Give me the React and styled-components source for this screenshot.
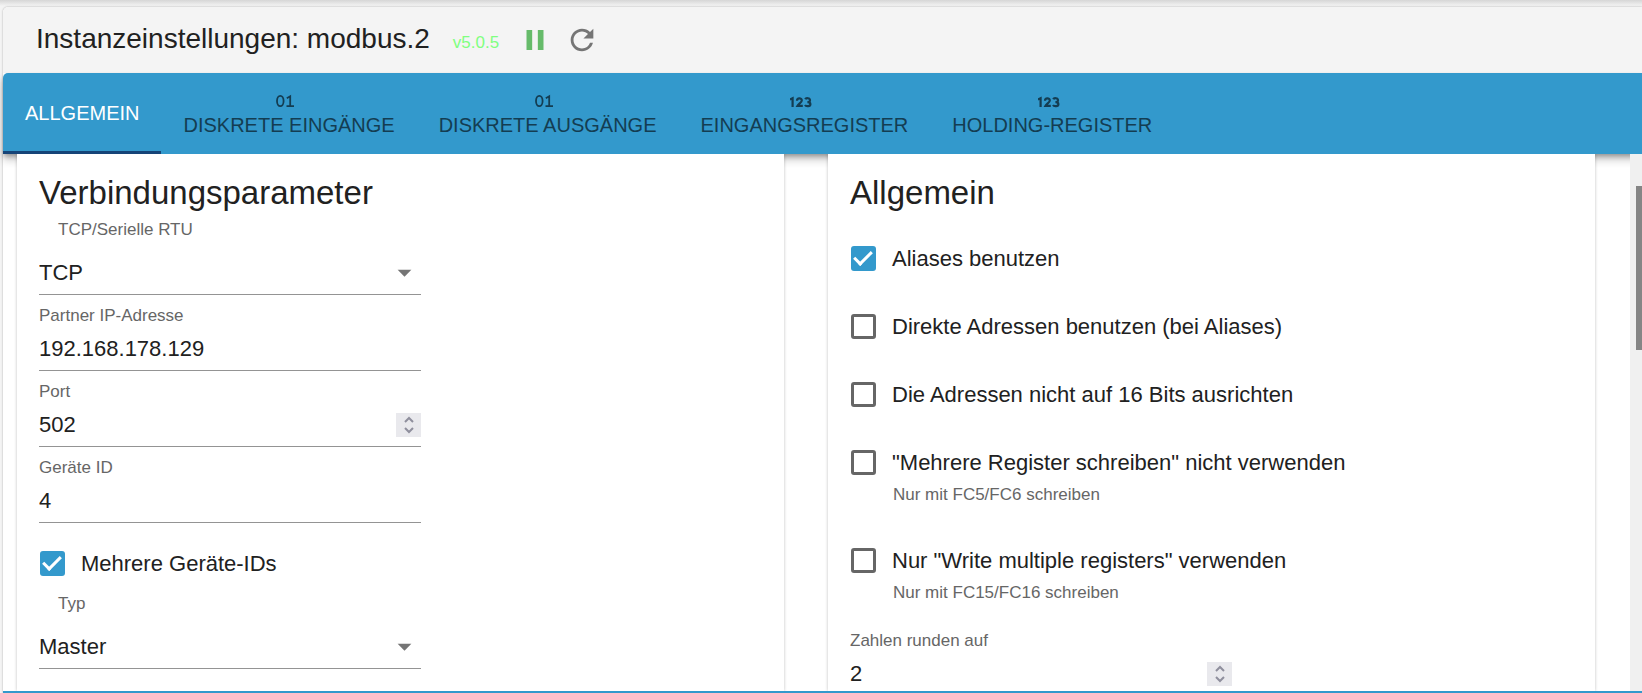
import React, { useState } from "react";
import styled, { createGlobalStyle } from "styled-components";
import { MdPause, MdRefresh, MdArrowDropDown } from "react-icons/md";

const TABS = [
  { id: "general", label: "Allgemein" },
  { id: "disInputs", label: "Diskrete Eingänge", icon: "bits" },
  { id: "coils", label: "Diskrete Ausgänge", icon: "bits" },
  { id: "inputRegs", label: "Eingangsregister", icon: "numbers" },
  { id: "holdingRegs", label: "Holding-Register", icon: "numbers" },
];

function BitsIcon() {
  return (
    <TabIcon viewBox="1 0 28 16" strokeWidth="1.8">
      <ellipse cx="6.3" cy="8" rx="3.3" ry="5.2" />
      <path d="M12.8 5.2 L16.2 3.2 V13 M12.5 13.2 H20" />
    </TabIcon>
  );
}

function NumbersIcon() {
  return (
    <TabIcon viewBox="2 0 28 16" strokeWidth="2.2">
      <path d="M2 6.4 L4.6 5.2 V14" />
      <path d="M9 7.8 C9 4.6 13.8 4.6 13.8 7.4 C13.8 9.4 10.4 11 9.4 12.9 H14.8" />
      <path d="M17.2 6.2 C18 4.6 22 4.9 22 7.2 C22 8.7 20.8 9.2 19.4 9.2 C21 9.2 22.4 9.8 22.4 11.2 C22.4 13.6 18 13.8 17 12" />
    </TabIcon>
  );
}

function SelectField({ id, label, value, options, onChange }) {
  return (
    <Field $select>
      <FieldLabel htmlFor={id} $indent>{label}</FieldLabel>
      <Control>
        <Select id={id} value={value} onChange={e => onChange(e.target.value)}>
          {options.map(o => <option key={o}>{o}</option>)}
        </Select>
        <Arrow size={33} />
      </Control>
    </Field>
  );
}

function TextField({ id, label, value, onChange, number }) {
  const step = n => onChange(String(Number(value) + n));

  return (
    <Field>
      <FieldLabel htmlFor={id}>{label}</FieldLabel>
      <Control>
        <Input id={id} type={number ? "number" : "text"} value={value} onChange={e => onChange(e.target.value)} />
        {number && (
          <Stepper>
            <StepButton type="button" aria-label="Erhöhen" onClick={() => step(1)}>
              <svg width="12" height="12" viewBox="0 0 12 12"><path d="M2 9 L6 5 L10 9" /></svg>
            </StepButton>
            <StepButton type="button" aria-label="Verringern" onClick={() => step(-1)}>
              <svg width="12" height="12" viewBox="0 0 12 12"><path d="M2 3 L6 7 L10 3" /></svg>
            </StepButton>
          </Stepper>
        )}
      </Control>
    </Field>
  );
}

function CheckField({ label, help, checked, onChange }) {
  return (
    <div>
      <CheckLabel>
        <Checkbox type="checkbox" checked={checked} onChange={e => onChange(e.target.checked)} />
        {label}
      </CheckLabel>
      {help && <Help>{help}</Help>}
    </div>
  );
}

export default function App() {
  const [tab, setTab] = useState("general");
  const [values, setValues] = useState({
    type: "TCP",
    bind: "192.168.178.129",
    port: "502",
    deviceId: "4",
    multiDeviceId: true,
    slave: "Master",
    useAliases: true,
    directAddresses: false,
    doNotAlign: false,
    onlySingle: false,
    onlyMultiple: false,
    round: "2",
  });
  const set = name => value => setValues({ ...values, [name]: value });

  return (
    <Page>
      <GlobalStyle />
      <Window>
        <Header>
          <Title>Instanzeinstellungen: modbus.2</Title>
          <Version>v5.0.5</Version>
          <IconButton $color="#66bb6a" aria-label="Anhalten"><MdPause size={34} /></IconButton>
          <IconButton $color="#757575" aria-label="Neu starten"><MdRefresh size={34} /></IconButton>
        </Header>
        <TabBar role="tablist">
          {TABS.map(t => (
            <Tab key={t.id} role="tab" aria-selected={tab === t.id} $active={tab === t.id} onClick={() => setTab(t.id)}>
              {t.icon === "bits" && <BitsIcon />}
              {t.icon === "numbers" && <NumbersIcon />}
              {t.label}
            </Tab>
          ))}
        </TabBar>
        <Body>
          <Content>
            <Card>
              <Heading>Verbindungsparameter</Heading>
              <SelectField id="type" label="TCP/Serielle RTU" value={values.type} options={["TCP", "Serial"]} onChange={set("type")} />
              <TextField id="bind" label="Partner IP-Adresse" value={values.bind} onChange={set("bind")} />
              <TextField id="port" label="Port" number value={values.port} onChange={set("port")} />
              <TextField id="deviceId" label="Geräte ID" value={values.deviceId} onChange={set("deviceId")} />
              <Checks $top={28}>
                <CheckField label="Mehrere Geräte-IDs" checked={values.multiDeviceId} onChange={set("multiDeviceId")} />
              </Checks>
              <SelectField id="slave" label="Typ" value={values.slave} options={["Master", "Slave"]} onChange={set("slave")} />
            </Card>
            <Card>
              <Heading>Allgemein</Heading>
              <Checks $top={27}>
                <CheckField label="Aliases benutzen" checked={values.useAliases} onChange={set("useAliases")} />
                <CheckField label="Direkte Adressen benutzen (bei Aliases)" checked={values.directAddresses} onChange={set("directAddresses")} />
                <CheckField label="Die Adressen nicht auf 16 Bits ausrichten" checked={values.doNotAlign} onChange={set("doNotAlign")} />
                <CheckField
                  label={'"Mehrere Register schreiben" nicht verwenden'}
                  help="Nur mit FC5/FC6 schreiben"
                  checked={values.onlySingle}
                  onChange={set("onlySingle")}
                />
                <CheckField
                  label={'Nur "Write multiple registers" verwenden'}
                  help="Nur mit FC15/FC16 schreiben"
                  checked={values.onlyMultiple}
                  onChange={set("onlyMultiple")}
                />
              </Checks>
              <TextField id="round" label="Zahlen runden auf" number value={values.round} onChange={set("round")} />
            </Card>
          </Content>
          <ScrollTrack>
            <ScrollThumb />
          </ScrollTrack>
        </Body>
      </Window>
    </Page>
  );
}

const GlobalStyle = createGlobalStyle`
  * {
    box-sizing: border-box;
  }

  body {
    margin: 0;
    font-family: "Liberation Sans", Arial, sans-serif;
    color: #212121;
  }

  button, input, select {
    font: inherit;
    color: inherit;
  }
`;

const Page = styled.div`
  display: flex;
  height: 100vh;
  padding: 7px 0 0 3px;
  overflow: hidden;
  background: linear-gradient(#d6d6d6, #f4f4f4 6px);
`;

const Window = styled.div`
  display: flex;
  flex-direction: column;
  flex: 1;
  min-width: 0;
  background: #fff;
  border-bottom: 2px solid #3399cc;
  border-top-left-radius: 5px;
  box-shadow: 0 0 2px rgba(0, 0, 0, 0.35);
`;

const Header = styled.header`
  display: flex;
  align-items: center;
  height: 66px;
  flex-shrink: 0;
  padding-left: 33px;
  background: #f4f4f4;
  border-top-left-radius: 5px;
`;

const Title = styled.h1`
  margin: 0 23px 0 0;
  font-size: 28px;
  line-height: 36px;
  font-weight: 400;
  padding-bottom: 2px;
`;

const Version = styled.span`
  margin-right: 19px;
  font-size: 17px;
  line-height: 20px;
  padding-top: 6px;
  color: #80ff80;
`;

const IconButton = styled.button`
  display: flex;
  margin-right: 13px;
  padding: 0;
  border: 0;
  background: none;
  color: ${props => props.$color};
  cursor: pointer;
`;

const TabBar = styled.nav`
  display: flex;
  height: 81px;
  flex-shrink: 0;
  background: #3399cc;
  border-top-left-radius: 5px;
  box-shadow: 0 3px 5px -1px rgba(0, 0, 0, 0.3), 0 6px 8px rgba(0, 0, 0, 0.2);
`;

const Tab = styled.button`
  display: flex;
  flex-direction: column;
  align-items: center;
  justify-content: center;
  gap: 4px;
  padding: 1px 22px 0;
  border: 0;
  border-bottom: 3px solid ${props => (props.$active ? "#164477" : "transparent")};
  background: none;
  color: ${props => (props.$active ? "#fff" : "#143d52")};
  font-size: 20px;
  line-height: 24px;
  text-transform: uppercase;
  white-space: nowrap;
  cursor: pointer;
`;

const TabIcon = styled.svg`
  width: 28px;
  height: 16px;
  margin-top: 4px;
  fill: none;
  stroke: currentColor;
`;

const Body = styled.div`
  display: flex;
  flex: 1;
  min-height: 0;
  position: relative;
`;

const Content = styled.div`
  display: grid;
  grid-template-columns: 1fr 1fr;
  gap: 44px;
  flex: 1;
  padding: 0 35px 0 14px;
  overflow: hidden;
`;

const Card = styled.section`
  min-height: 100%;
  padding: 19px 22px;
  background: #fff;
  box-shadow: 0 0 3px rgba(0, 0, 0, 0.25);
`;

const Heading = styled.h2`
  margin: 0 0 6px;
  font-size: 33px;
  line-height: 40px;
  font-weight: 400;
`;

const Field = styled.div`
  display: flex;
  flex-direction: column;
  justify-content: space-between;
  height: 76px;
  max-width: 382px;
  padding-top: ${props => (props.$select ? 0 : 10)}px;
`;

const FieldLabel = styled.label`
  padding-left: ${props => (props.$indent ? 19 : 0)}px;
  font-size: 17px;
  line-height: 22px;
  color: #666;
`;

const Control = styled.div`
  display: flex;
  align-items: center;
  height: 44px;
  border-bottom: 1px solid #949494;
`;

const Input = styled.input`
  flex: 1;
  min-width: 0;
  height: 100%;
  padding: 0;
  border: 0;
  outline: 0;
  background: none;
  font-size: 22px;
  appearance: textfield;

  &::-webkit-inner-spin-button {
    appearance: none;
    margin: 0;
  }
`;

const Select = styled.select`
  flex: 1;
  height: 100%;
  margin-right: -33px;
  padding: 0 33px 0 0;
  border: 0;
  outline: 0;
  background: none;
  font-size: 22px;
  appearance: none;
`;

const Arrow = styled(MdArrowDropDown)`
  color: #757575;
  pointer-events: none;
`;

const Stepper = styled.div`
  display: flex;
  flex-direction: column;
  width: 25px;
  height: 24px;
  background: #e9e9ed;
`;

const StepButton = styled.button`
  display: flex;
  justify-content: center;
  align-items: center;
  height: 12px;
  padding: 0;
  border: 0;
  background: none;

  path {
    fill: none;
    stroke: #8f8f9d;
    stroke-width: 2;
  }
`;

const Checks = styled.div`
  display: flex;
  flex-direction: column;
  gap: 43px;
  padding: ${props => props.$top}px 0 17px;
`;

const CheckLabel = styled.label`
  display: flex;
  align-items: center;
  gap: 16px;
  padding-left: 1px;
  font-size: 22px;
  line-height: 25px;
`;

const Checkbox = styled.input`
  appearance: none;
  width: 25px;
  height: 25px;
  margin: 0;
  border: 3px solid #666;
  border-radius: 3px;

  &:checked {
    border: 0;
    background: #3399cc;
  }

  &:checked::before {
    content: "";
    display: block;
    width: 7px;
    height: 15px;
    margin: 1px 0 0 7px;
    border: solid #fff;
    border-width: 0 3px 3px 0;
    transform: rotate(45deg);
  }
`;

const Help = styled.p`
  margin: 10px 0 0;
  padding-left: 43px;
  font-size: 17px;
  line-height: 20px;
  color: #666;
`;

const ScrollTrack = styled.div`
  width: 12px;
  padding: 32px 0 0 6px;
  background: #f0f0f0;
`;

const ScrollThumb = styled.div`
  height: 164px;
  background: #858585;
`;
